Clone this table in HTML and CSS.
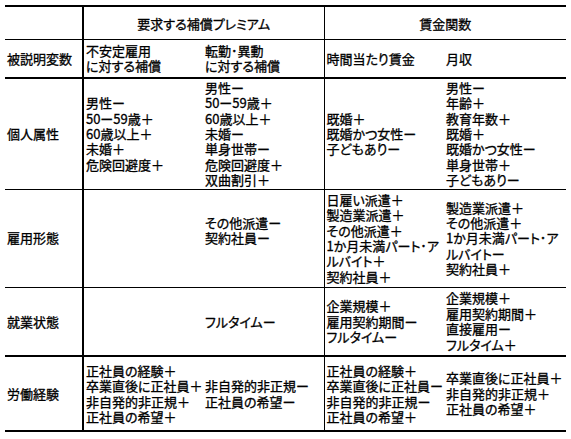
FILE: index.html
```html
<!DOCTYPE html>
<html lang="ja">
<head>
<meta charset="utf-8">
<link rel="stylesheet" href="styles.css">
</head>
<body>
<table class="tbl">
  <colgroup>
    <col class="c1"><col class="c2"><col class="c3"><col class="c4"><col class="c5">
  </colgroup>
  <tr class="r-h1">
    <th class="lab"></th>
    <th colspan="2" class="grp sep">要求する補償プレミアム</th>
    <th colspan="2" class="grp">賃金関数</th>
  </tr>
  <tr class="r-h2">
    <th class="lab">被説明変数</th>
    <th><span class="ln">不安定雇用</span><span class="ln">に対する補償</span></th>
    <th class="sep"><span class="ln">転勤･異動</span><span class="ln">に対する補償</span></th>
    <th>時間当たり賃金</th>
    <th>月収</th>
  </tr>
  <tr class="r-a">
    <td class="lab">個人属性</td>
    <td><span class="ln">男性ー</span><span class="ln">50ー59歳＋</span><span class="ln">60歳以上＋</span><span class="ln">未婚＋</span><span class="ln">危険回避度＋</span></td>
    <td class="sep"><span class="ln">男性ー</span><span class="ln">50ー59歳＋</span><span class="ln">60歳以上＋</span><span class="ln">未婚ー</span><span class="ln">単身世帯ー</span><span class="ln">危険回避度＋</span><span class="ln">双曲割引＋</span></td>
    <td><span class="ln">既婚＋</span><span class="ln">既婚かつ女性ー</span><span class="ln">子どもありー</span></td>
    <td><span class="ln">男性ー</span><span class="ln">年齢＋</span><span class="ln">教育年数＋</span><span class="ln">既婚＋</span><span class="ln">既婚かつ女性ー</span><span class="ln">単身世帯＋</span><span class="ln">子どもありー</span></td>
  </tr>
  <tr class="r-b">
    <td class="lab">雇用形態</td>
    <td></td>
    <td class="sep"><span class="ln">その他派遣ー</span><span class="ln">契約社員ー</span><span class="ln">&nbsp;</span></td>
    <td><span class="ln">日雇い派遣＋</span><span class="ln">製造業派遣＋</span><span class="ln">その他派遣＋</span><span class="ln">1か月未満パート･ア</span><span class="ln">ルバイト＋</span><span class="ln">契約社員＋</span></td>
    <td><span class="ln">製造業派遣＋</span><span class="ln">その他派遣＋</span><span class="ln">1か月未満パート･ア</span><span class="ln">ルバイトー</span><span class="ln">契約社員＋</span></td>
  </tr>
  <tr class="r-c">
    <td class="lab">就業状態</td>
    <td></td>
    <td class="sep">フルタイムー</td>
    <td><span class="ln">企業規模＋</span><span class="ln">雇用契約期間ー</span><span class="ln">フルタイムー</span></td>
    <td><span class="ln">企業規模＋</span><span class="ln">雇用契約期間＋</span><span class="ln">直接雇用ー</span><span class="ln">フルタイム＋</span></td>
  </tr>
  <tr class="r-d">
    <td class="lab">労働経験</td>
    <td><span class="ln">正社員の経験＋</span><span class="ln">卒業直後に正社員＋</span><span class="ln">非自発的非正規＋</span><span class="ln">正社員の希望＋</span></td>
    <td class="sep"><span class="ln">非自発的非正規ー</span><span class="ln">正社員の希望ー</span></td>
    <td><span class="ln">正社員の経験＋</span><span class="ln">卒業直後に正社員ー</span><span class="ln">非自発的非正規ー</span><span class="ln">正社員の希望＋</span></td>
    <td><span class="ln">卒業直後に正社員＋</span><span class="ln">非自発的非正規＋</span><span class="ln">正社員の希望＋</span></td>
  </tr>
</table>
</body>
</html>
```
FILE: styles.css
```css
html, body {
  margin: 0;
  padding: 0;
  background: #fff;
}
body {
  padding: 5px 0 0 5px;
  font-family: "Noto Sans CJK JP", "Noto Sans", sans-serif;
  font-size: 13px;
  font-weight: 400;
  font-feature-settings: "palt";
  color: #000;
  -webkit-text-stroke: 0.3px #000;
}
.tbl {
  border-collapse: collapse;
  table-layout: fixed;
  width: 561px;
  border-top: 2px solid #000;
  border-bottom: 2px solid #000;
}
.c1 { width: 78px; }
.c2 { width: 120px; }
.c3 { width: 121px; }
.c4 { width: 120px; }
.c5 { width: 122px; }
.tbl th, .tbl td {
  padding: 0 0 0 2px;
  text-align: left;
  vertical-align: middle;
  font-weight: 400;
  line-height: 15.4px;
  white-space: nowrap;
  overflow: hidden;
  border-bottom: 1px solid #000;
}
.ln {
  display: block;
  height: 15.4px;
  line-height: 15.4px;
}
.tbl .lab {
  border-right: 2px solid #000;
  padding-left: 2px;
}
.tbl .sep {
  border-right: 1px solid #000;
}
.tbl .grp {
  text-align: center;
  padding: 2px 0 0 0;
}
.r-h1 { height: 33px; }
.r-h2 { height: 39px; }
.r-h2 th { border-bottom: 2px solid #000; }
.r-a { height: 111px; }
.r-b { height: 98px; }
.r-c { height: 69px; }
.r-c td { border-bottom: 2px solid #000; }
.r-d { height: 75px; }
.r-d td { border-bottom: none; }
```
